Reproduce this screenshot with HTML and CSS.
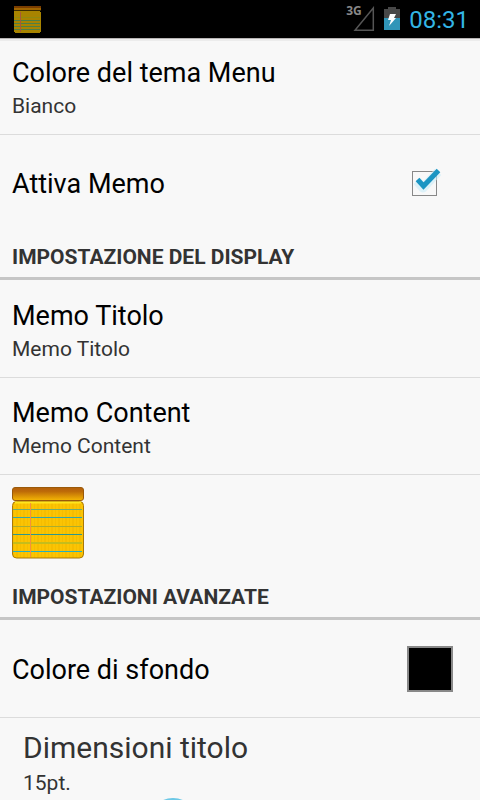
FILE: index.html
```
<!DOCTYPE html>
<html lang="it">
<head>
<meta charset="utf-8">
<meta name="viewport" content="width=device-width, initial-scale=1">
<title>Memo</title>
<link rel="stylesheet" href="styles.css">
</head>
<body>
<header class="status">
  <svg class="status-note" width="27" height="27" viewBox="0 0 27 27" aria-hidden="true">
    <path fill="#a88400" d="M0 0h26v6h1v20h-1v1H1v-1H0z"/>
    <path fill="#7a3d00" d="M0 0h27v2H0z"/>
    <path fill="#a06500" d="M0 2h27v2H0z"/>
    <path fill="#3c2c00" d="M0 4h27v1H0z"/>
    <path stroke="#4f7f45" d="M0 14.500h26M0 17.500h26M0 20.500h26M0 23.500h26"/>
    <path stroke="#8f8a10" d="M0 11.500h26"/>
    <path stroke="#a8583a" d="M6.500 6v20"/>
  </svg>
  <div class="status-right">
    <svg class="signal" width="29" height="27" viewBox="0 0 29 27" aria-hidden="true">
      <path fill="none" stroke="#555" stroke-width="1.500" d="M27.300 2v22.300H9z"/>
    </svg>
    <span class="network">3G</span>
    <svg class="battery" width="16" height="24" viewBox="0 0 16 24" aria-hidden="true">
      <path fill="#484848" d="M4 0h8v2h4v9H0V2h4z"/>
      <path fill="#3095b8" d="M0 11h16v12H0z"/>
      <path fill="#fff" d="M6 7h6l-2 4h2l-7 8 2-6H4z"/>
    </svg>
    <time class="clock">08:31</time>
  </div>
</header>
<main>
  <section class="row">
    <div class="texts"><h3>Colore del tema Menu</h3><p>Bianco</p></div>
  </section>
  <section class="row last">
    <label class="name" for="memo">Attiva Memo</label>
    <span class="check">
      <input type="checkbox" id="memo" checked>
      <svg width="48" height="48" viewBox="0 0 48 48" aria-hidden="true">
        <path fill="none" stroke="#c9edf8" stroke-width="9" stroke-linejoin="round" opacity=".6" d="M17 22l6 7L38 13"/>
        <path fill="none" stroke="#1b95c3" stroke-width="5" d="M17.500 20.500l6 6.500L38.500 11.500"/>
      </svg>
    </span>
  </section>
  <h2>IMPOSTAZIONE DEL DISPLAY</h2>
  <section class="row">
    <div class="texts"><h3>Memo Titolo</h3><p>Memo Titolo</p></div>
  </section>
  <section class="row">
    <div class="texts"><h3>Memo Content</h3><p>Memo Content</p></div>
  </section>
  <section class="row last">
    <svg width="72" height="72" viewBox="0 0 72 72" aria-hidden="true">
      <defs>
        <linearGradient id="band" x1="0" y1="0" x2="0" y2="1">
          <stop offset="0" stop-color="#b45f0c"/><stop offset=".3" stop-color="#bd6a08"/><stop offset="1" stop-color="#f5b704"/>
        </linearGradient>
        <pattern id="grain" width="7" height="8" patternUnits="userSpaceOnUse">
          <path fill="#fbc403" d="M0 0h7v8H0z"/><path fill="#f6bd00" d="M1 0h1v8H1zM4 0h2v8H4z"/>
        </pattern>
      </defs>
      <rect x=".5" y="14.500" width="71" height="56.500" rx="4" fill="url(#grain)" stroke="#a87808"/>
      <path stroke="#ffe51e" stroke-width="2" d="M3 15.500h66"/>
      <rect x=".5" y=".5" width="71" height="13" rx="2.500" fill="url(#band)" stroke="#9a5a0a"/>
      <path stroke="#c4bd1c" stroke-width="2" d="M1 56h69"/>
      <path stroke="#a9ad30" d="M1 39.500h69"/>
      <path stroke="#6eaa72" d="M1 22.500h69"/>
      <path stroke="#35a5a5" d="M1 30.500h69"/>
      <path stroke="#2b9790" d="M1 47.500h69"/>
      <path stroke="#25b0c0" d="M1 64.500h69"/>
      <path stroke="#f4923c" d="M18.500 16v54"/>
    </svg>
  </section>
  <h2>IMPOSTAZIONI AVANZATE</h2>
  <section class="row">
    <span class="name" id="background">Colore di sfondo</span>
    <button class="swatch" type="button" aria-labelledby="background"></button>
  </section>
  <section class="size">
    <label for="size">Dimensioni titolo</label>
    <output for="size">15pt.</output>
    <input id="size" type="range" min="0" max="46" value="15">
  </section>
</main>
</body>
</html>
```
FILE: styles.css
```
* {
  box-sizing: border-box;
}

body {
  margin: 0;
  height: 100vh;
  display: flex;
  flex-direction: column;
  overflow: hidden;
  background: #f8f8f8;
  color: #000;
  font-family: Roboto, "Liberation Sans", sans-serif;
}

h2, h3, p {
  margin: 0;
}

.status {
  flex: none;
  height: 38px;
  padding: 0 11px 0 14px;
  display: flex;
  align-items: center;
  justify-content: space-between;
  background: #000;
}

.status-right {
  position: relative;
  display: flex;
  align-items: center;
}

.network {
  position: absolute;
  left: 0;
  top: 0;
  color: #888;
  font-family: "Open Sans", Roboto, sans-serif;
  font-size: 12px;
  font-weight: 700;
  line-height: 14px;
}

.battery {
  margin: 0 9px;
}

.clock {
  padding-top: 2px;
  color: #33b5e5;
  font-size: 24px;
  line-height: 28px;
}

main {
  flex: 1;
  min-height: 0;
  overflow: hidden;
  box-shadow: inset 0 1px #b8b4b4, inset 0 3px #ececec;
}

.row {
  height: 97px;
  padding: 0 12px;
  display: flex;
  align-items: center;
  justify-content: space-between;
  border-bottom: 1px solid #dcdcdc;
}

.row.last {
  border-color: transparent;
}

.texts {
  padding-top: 4px;
}

.name {
  padding-top: 2px;
}

h3, .name {
  font-size: 27px;
  font-weight: 400;
  line-height: 36px;
}

p, output {
  color: #333;
  font-size: 21px;
  line-height: 30px;
}

h2 {
  height: 48px;
  margin-bottom: 1px;
  padding: 0 12px;
  border-bottom: 3px solid #c6c6c6;
  color: #333;
  font-size: 21px;
  font-weight: 700;
  line-height: 50px;
}

.check {
  position: relative;
  width: 48px;
  height: 48px;
  margin-right: 20px;
}

.check input {
  appearance: none;
  display: block;
  width: 25px;
  height: 25px;
  margin: 12px;
  border: 1px solid #888;
}

.check svg {
  position: absolute;
  left: 0;
  top: 0;
  pointer-events: none;
}

.swatch {
  width: 46px;
  height: 46px;
  margin-right: 15px;
  padding: 0;
  border: 2px solid #888;
  background: #000;
}

.size {
  padding: 12px 23px;
  display: flex;
  flex-direction: column;
}

.size label {
  color: #333;
  font-size: 30px;
  line-height: 36px;
}

.size output {
  padding-top: 2px;
}

.size input {
  appearance: none;
  flex: none;
  width: 100%;
  height: 48px;
  margin: 0;
  background: none;
}

.size input::-webkit-slider-thumb {
  appearance: none;
  width: 48px;
  height: 48px;
  border: 2px solid #6cc8e6;
  border-radius: 50%;
  background: #c4e6f2;
}
```
